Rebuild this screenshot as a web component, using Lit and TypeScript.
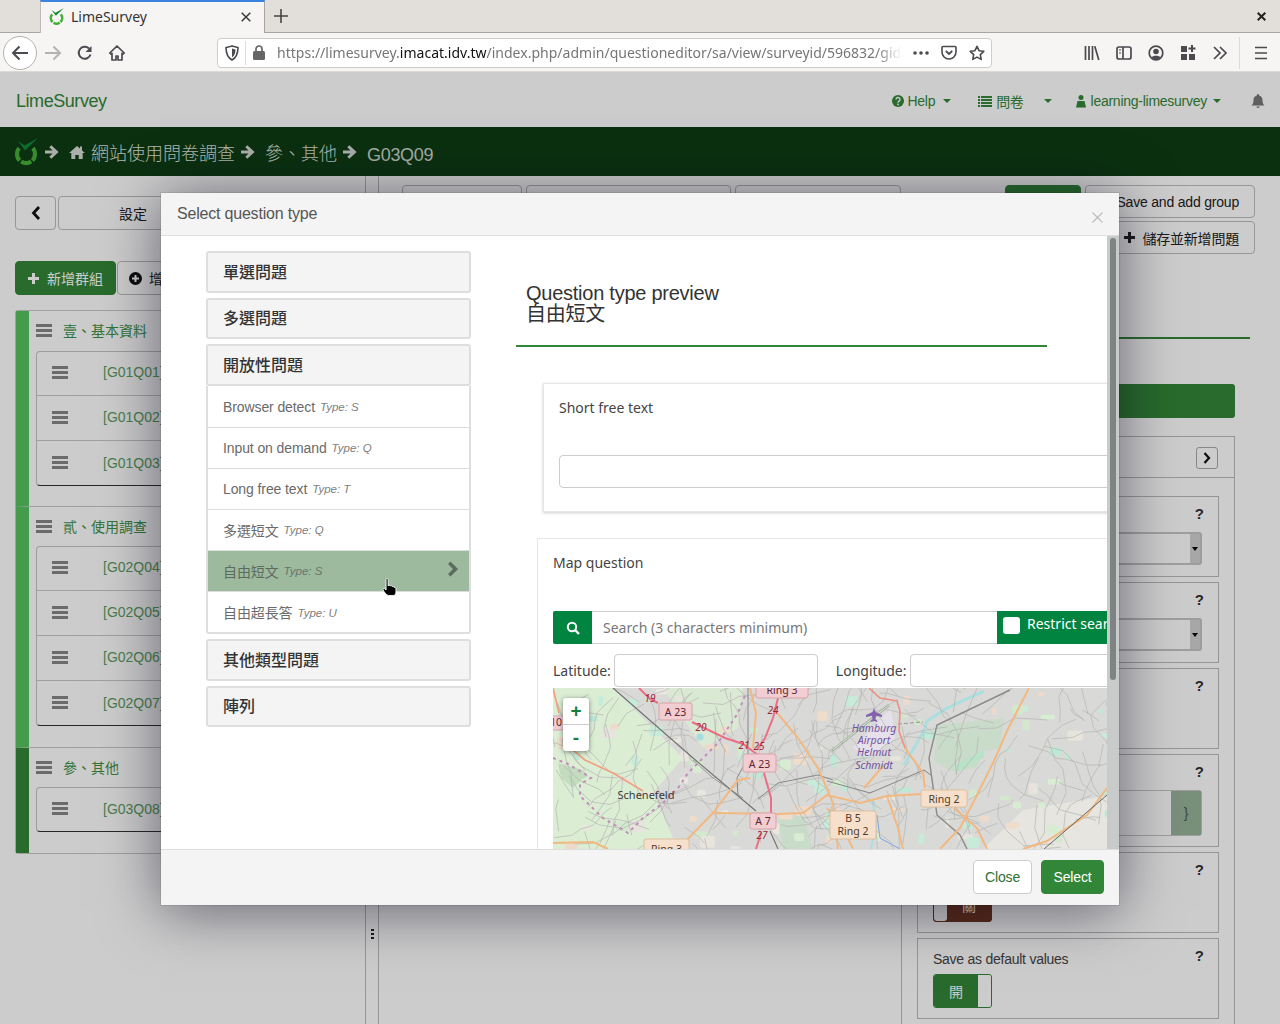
import { LitElement, html, css, svg } from 'lit';
import { customElement } from 'lit/decorators.js';

const SANS = css`"Liberation Sans", "Noto Sans CJK TC", sans-serif`;
const NOTO = css`"Noto Sans", "Noto Sans CJK TC", sans-serif`;

const limeLogo = (size: number) => html`
  <svg class="logo" width=${size} height=${(size * 28) / 24} viewBox="0 0 24 28">
    <path d="M5.100 10.200A9 9 0 0 0 5.600 22.400" fill="none" stroke="#45b03a" stroke-width="4.200"/>
    <path d="M7.200 23.600A9 9 0 0 0 17.200 23.400" fill="none" stroke="#45b03a" stroke-width="4.200"/>
    <path d="M18.400 22.400A9 9 0 0 0 18.900 10.200" fill="none" stroke="#45b03a" stroke-width="4.200"/>
    <path d="M4 3L10.500 7.500 24 0 11 12.500Z" fill="#11893a"/>
  </svg>`;

const arrowRight = (l: number, r: number) => html`
  <svg style="margin:0 ${r}px 0 ${l}px;flex:none" width="16" height="16" viewBox="0 0 16 16">
    <path d="M1 6.500h7.500L5.300 3.200 7.300 1.200 14.600 8l-7.300 6.800-2-2 3.200-3.300H1z" fill="#d5dbd5"/>
  </svg>`;

const burger = () => html`
  <svg width="16" height="13" viewBox="0 0 16 13" style="flex:none">
    <path d="M0 0h16v3H0zM0 5h16v3H0zM0 10h16v3H0z" fill="#868686"/>
  </svg>`;

const caret = html`<span class="caret"></span>`;

/* Static road map. Everything here is a position on a free canvas. */
@customElement('osm-map')
export class OsmMap extends LitElement {
  static styles = css`
    :host { display: block; width: 554px; height: 161px; overflow: hidden; }
    svg { display: block; }
    text { font-family: "Noto Sans", sans-serif; }
  `;

  private rand(start: number) {
    let seed = start;
    return () => {
      seed = (seed * 16807) % 2147483647;
      return seed / 2147483647;
    };
  }

  private streets() {
    // small seeded walks give the grey street texture
    const rnd = this.rand(4711);
    const out: string[] = [];
    for (let i = 0; i < 210; i++) {
      let x = rnd() * 554;
      let y = rnd() * 161;
      let a = rnd() * 6.28;
      let d = `M${x.toFixed(1)} ${y.toFixed(1)}`;
      const n = 2 + Math.floor(rnd() * 4);
      for (let j = 0; j < n; j++) {
        a += (rnd() - 0.5) * 1.2;
        const l = 6 + rnd() * 18;
        x += Math.cos(a) * l;
        y += Math.sin(a) * l;
        d += `L${x.toFixed(1)} ${y.toFixed(1)}`;
      }
      out.push(d);
    }
    return out;
  }

  private patches() {
    const rnd = this.rand(907);
    const colors = ['#d3e8cc', '#f0dccb', '#e6e4dc', '#c6ecd9', '#d8ecd2', '#eedaca', '#e8e6de', '#bfe9d6'];
    const out: { x: number; y: number; w: number; h: number; c: string }[] = [];
    for (let i = 0; i < 110; i++) {
      out.push({
        x: rnd() * 554,
        y: rnd() * 161,
        w: 3 + rnd() * 13,
        h: 3 + rnd() * 9,
        c: colors[Math.floor(rnd() * colors.length)],
      });
    }
    return out;
  }

  render() {
    const orange = [
      'M197 0L203 25L200 60',
      'M220 20L245 50L265 80L280 115L285 161',
      'M125 161L160 125L185 92L197 90',
      'M160 125L225 126L250 125L274 107L307 115L334 108L369 106',
      'M352 60L370 85L372 100',
      'M476 0L454 43L441 73L421 113L407 140L387 161',
      'M311 100L331 77',
      'M401 120L424 140L434 161',
      'M554 100L534 127L494 153L470 161',
      'M274 120L290 140L300 161',
      'M334 108L345 140L350 161',
      'M0 155L40 154L55 161',
    ];
    const boxes = [
      { x: 106, y: 15, w: 33, h: 17, t: ['A 23'], f: '#f2cdd2', s: '#d9a3ab', c: '#5a2630' },
      { x: 203, y: -6, w: 52, h: 16, t: ['Ring 3'], f: '#f2cdd2', s: '#d9a3ab', c: '#5a2630' },
      { x: 190, y: 66, w: 33, h: 18, t: ['A 23'], f: '#f2cdd2', s: '#d9a3ab', c: '#5a2630' },
      { x: 197, y: 125, w: 26, h: 16, t: ['A 7'], f: '#f2cdd2', s: '#d9a3ab', c: '#5a2630' },
      { x: 277, y: 123, w: 46, h: 28, t: ['B 5', 'Ring 2'], f: '#f7e0cb', s: '#dcbf9f', c: '#4f3a26' },
      { x: 368, y: 102, w: 46, h: 17, t: ['Ring 2'], f: '#f7e0cb', s: '#dcbf9f', c: '#4f3a26' },
      { x: 91, y: 151, w: 45, h: 18, t: ['Ring 3'], f: '#f7e0cb', s: '#dcbf9f', c: '#4f3a26' },
      { x: -9, y: 28, w: 24, h: 14, t: ['10'], f: '#f2cdd2', s: '#d9a3ab', c: '#5a2630' },
    ];
    const nums = [
      ['19', 97, 10], ['20', 148, 39], ['21', 191, 57], ['25', 206, 58], ['24', 220, 22], ['27', 209, 147],
    ];
    return html`
      <svg width="554" height="161" viewBox="0 0 554 161">
        <rect width="554" height="161" fill="#d9d9d7"/>
        <path d="M0 0H60L130 70L100 105L125 161H0Z" fill="#dbeed4"/>
        <path d="M110 0H190L185 40L150 60Z" fill="#d9e9d3"/>
        <path d="M430 161L470 122L554 108V161Z" fill="#e6e5df"/>
        <path d="M225 130L250 127L260 161H230Z" fill="#c9dcca"/>
        ${this.patches().map(p => svg`<rect x=${p.x} y=${p.y} width=${p.w} height=${p.h} rx="2" fill=${p.c}/>`)}
        <path d="M5 75L30 82L35 88L28 92L20 100L8 90Z" fill="#c3dcbe"/>
        <path d="M384 37L451 30L447 60L431 63L424 80L397 83L381 73Z" fill="#c9dcca"/>
        <path d="M401 78L430 62L432 68L406 84Z" fill="#b9e3c9"/>
        <path d="M300 60L338 20L342 50L315 70Z" fill="#e6e0ea"/>
        <path d="M279 63L336 17" fill="none" stroke="#9fb0a0" stroke-width="2.500"/>
        <path d="M280 62L336 17" fill="none" stroke="#dfe8dc" stroke-width="1"/>
        <path d="M431 3L394 20L374 33L371 43L351 77" fill="none" stroke="#a9dfe0" stroke-width="3"/>
        <path d="M320 112L322 140L318 161" fill="none" stroke="#a9dfe0" stroke-width="2"/>
        <circle cx="147" cy="49" r="3.500" fill="#a5dde0"/>
        <path d="M324 127L327 150L347 161" fill="none" stroke="#7ea3e8" stroke-width="1"/>
        ${this.streets().map(d => svg`<path d=${d} fill="none" stroke="#b4b4b2" stroke-width=".7"/>`)}
        <path d="M60 0L140 70L203 123M217 143L225 161" fill="none" stroke="#6f6f6f" stroke-width="1.100"/>
        <path d="M140 72L160 90L190 110" fill="none" stroke="#8c8c8c" stroke-width=".8"/>
        <path d="M195 0L195 70L184 90L185 108" fill="none" stroke="#868686" stroke-width="1"/>
        <path d="M205 111L225 95L265 87L280 92" fill="none" stroke="#828282" stroke-width=".9"/>
        <path d="M274 93L317 105L371 82L379 88" fill="none" stroke="#7c7c7c" stroke-width=".9"/>
        <path d="M457 2L384 37L376 70L384 127L407 147L414 161" fill="none" stroke="#8a8a8a" stroke-width="1.400"/>
        <path d="M345 36L370 34" fill="none" stroke="#999" stroke-dasharray="4 2"/>
        <path d="M0 70L15 76L35 88L38 90L27 96L27 108L50 130L75 145L90 130L110 115L125 100L135 85L165 55L185 25L193 5" fill="none" stroke="#c48bbd" stroke-width="2" stroke-dasharray="3 4"/>
        ${orange.map(d => svg`<path d=${d} fill="none" stroke="#f2b880" stroke-width="2"/>`)}
        <path d="M554 107L491 161" fill="none" stroke="#666" stroke-width="1"/>
        <path d="M0 0L6 25M20 62L32 72L60 85L90 103" fill="none" stroke="#f2a083" stroke-width="1.700"/>
        <path d="M316 0L327 10L344 13L347 23L346 43L352 60" fill="none" stroke="#ee8f80" stroke-width="1.600"/>
        <path d="M86 0L97 11L105 15M139 34L172 50L190 56L205 67M225 10L220 30L212 50L204 62M211 85L218 110L218 125M208 145L203 161" fill="none" stroke="#ec6f85" stroke-width="2"/>
        ${boxes.map(b => svg`
          <rect x=${b.x} y=${b.y} width=${b.w} height=${b.h} rx="2" fill=${b.f} stroke=${b.s}/>
          ${b.t.map((t, i) => svg`<text x=${b.x + b.w / 2} y=${b.y + b.h - (b.t.length - i - 1) * 13 - 4} text-anchor="middle" font-size="10.500" fill=${b.c}>${t}</text>`)}
        `)}
        ${nums.map(n => svg`<text x=${n[1]} y=${Number(n[2]) + 4} text-anchor="middle" font-size="10" font-style="italic" fill="#a3243c">${n[0]}</text>`)}
        <text x="93" y="111" text-anchor="middle" font-size="11" fill="#3a3a3a">Schenefeld</text>
        <path d="M321 20l1.500 4 6.500 3v2l-6-1.300-.6 3.600 1.800 1.500v1.200l-3.200-.9-3.200.9v-1.200l1.800-1.500-.6-3.600-6 1.300v-2l6.500-3z" fill="#8461ad"/>
        ${['Hamburg', 'Airport', 'Helmut', 'Schmidt'].map((t, i) => svg`<text x="321" y=${44 + i * 12.2} text-anchor="middle" font-size="10.500" font-style="italic" fill="#7252a0">${t}</text>`)}
      </svg>`;
  }
}

/* The question type dialog */
@customElement('type-modal')
export class TypeModal extends LitElement {
  static styles = css`
    :host {
      display: flex;
      flex-direction: column;
      width: 958px;
      height: 712px;
      background: #fff;
      font-family: ${SANS};
      color: #333;
      overflow: hidden;
    }
    .head {
      height: 43px;
      flex: none;
      box-sizing: border-box;
      display: flex;
      align-items: center;
      justify-content: space-between;
      padding: 0 16px;
      background: #f4f4f4;
      border-bottom: 1px solid #ddd;
      font-size: 16px;
      letter-spacing: -.2px;
      color: #555;
    }
    .x { width: 11px; height: 11px; margin-top: 7px; }
    .body { flex: 1; display: flex; min-height: 0; }
    .types {
      width: 265px;
      flex: none;
      margin: 15px 0 0 45px;
      display: flex;
      flex-direction: column;
      gap: 5px;
    }
    .acc {
      box-sizing: border-box;
      height: 41.500px;
      display: flex;
      align-items: center;
      padding: 0 15px 2px;
      background: #f4f4f4;
      border: 2px solid #dedede;
      border-radius: 3px;
      font-size: 16px;
      font-weight: 500;
      color: #333;
    }
    .open-list {
      margin-top: -5px;
      box-sizing: border-box;
      height: 248.500px;
      padding-top: 1px;
      background: #fff;
      border: 2px solid #dedede;
      border-top: 0;
      border-radius: 0 0 3px 3px;
    }
    .row {
      box-sizing: border-box;
      height: 41px;
      padding: 0 15px;
      display: flex;
      align-items: center;
      border-bottom: 1px solid #ddd;
      font-size: 14px;
      letter-spacing: -.1px;
      color: #6a6a6a;
    }
    .row:last-child { border-bottom: 0; }
    .row em { margin-left: 5px; font-size: 11.500px; letter-spacing: 0; color: #808080; padding-top: 1px; }
    .row.on { background: #9dba9f; color: #5d6a5e; }
    .row.on em { color: #66766a; }
    .row svg { margin-left: auto; margin-right: -5px; margin-top: -3px; }
    .preview { flex: 1; min-width: 0; overflow: hidden; padding-left: 45px; }
    .preview h4 {
      margin: 47px 0 0 10px;
      font-size: 20px;
      line-height: 21px;
      font-weight: 400;
      letter-spacing: -.25px;
      color: #333;
    }
    .rule { width: 531px; height: 2px; margin-top: 20px; background: #328637; }
    .q {
      box-sizing: border-box;
      background: #fff;
      border: 1px solid #e6e6e6;
      font-family: ${NOTO};
      font-size: 14px;
      color: #444;
      width: 620px;
    }
    .q.short {
      margin: 36px 0 0 27px;
      height: 129px;
      padding: 14px 15px;
      box-shadow: 0 1px 3px rgba(0, 0, 0, .2);
    }
    .q.map { margin: 26px 0 0 21px; height: 340px; padding: 14px 15px; }
    .q .label { line-height: 20px; }
    .q input {
      box-sizing: border-box;
      display: block;
      height: 33px;
      border: 1px solid #ccc;
      border-radius: 4px;
      background: #fff;
      padding: 0;
    }
    .short input { width: 600px; margin-top: 37px; }
    .search {
      display: flex;
      width: 600px;
      height: 33px;
      margin-top: 38px;
      box-sizing: border-box;
      border: 1px solid #ccc;
      border-left: 0;
      border-radius: 2px;
    }
    .search .ico {
      width: 39px;
      height: 33px;
      margin-top: -1px;
      flex: none;
      background: #00843f;
      display: flex;
      align-items: center;
      justify-content: center;
      border-radius: 2px 0 0 2px;
    }
    .search .ph { width: 405px; padding: 0 11px; box-sizing: border-box; line-height: 32px; color: #777; flex: none; }
    .search .restrict {
      flex: 1;
      height: 33px;
      margin-top: -1px;
      background: #00843f;
      color: #fff;
      display: flex;
      gap: 7px;
      padding: 3px 0 0 6px;
      box-sizing: border-box;
      white-space: nowrap;
      line-height: 20px;
    }
    .box { width: 17px; height: 17px; background: #fff; border-radius: 3px; flex: none; margin-top: 3px; }
    .coords { display: flex; align-items: center; height: 33px; margin-top: 10px; gap: 3px; }
    .coords input { flex: none; }
    .coords input.lat { width: 204px; margin-right: 15px; }
    .coords input.lng { width: 260px; margin-left: 1px; }
    .mapwrap { position: relative; margin-top: 1px; }
    .zoom {
      position: absolute;
      left: 10px;
      top: 10px;
      width: 26px;
      background: #fff;
      border-radius: 3px;
      box-shadow: 0 1px 5px rgba(0, 0, 0, .45);
      font: bold 19px/26px "Liberation Sans", sans-serif;
      color: #15803d;
      text-align: center;
    }
    .zoom div { height: 26px; }
    .zoom div:first-child { border-bottom: 1px solid #ccc; }
    .track { width: 12px; flex: none; background: #c9cbcb; display: flex; justify-content: center; padding-top: 2px; box-sizing: border-box; }
    .thumb { width: 6px; height: 442px; background: #7e8383; border-radius: 3px; }
    .foot {
      height: 56px;
      flex: none;
      box-sizing: border-box;
      border-top: 1px solid #ddd;
      background: #f4f4f4;
      display: flex;
      align-items: center;
      justify-content: flex-end;
      gap: 9px;
      padding: 0 15px 1px;
    }
    .btn {
      box-sizing: border-box;
      width: 59px;
      height: 34px;
      display: flex;
      align-items: center;
      justify-content: center;
      border-radius: 4px;
      font-size: 14px;
      letter-spacing: -.15px;
      border: 1px solid #ccc;
      background: #fff;
      color: #2f6f35;
    }
    .btn.go { width: 63px; background: #328637; border-color: #328637; color: #fff; }
  `;

  render() {
    return html`
      <div class="head">
        <span>Select question type</span>
        <svg class="x" viewBox="0 0 11 11"><path d="M.5.5l10 10M10.500.5l-10 10" stroke="#bdbdbd" stroke-width="1.200"/></svg>
      </div>
      <div class="body">
        <div class="types">
          <div class="acc">單選問題</div>
          <div class="acc">多選問題</div>
          <div class="acc">開放性問題</div>
          <div class="open-list">
            <div class="row">Browser detect <em>Type: S</em></div>
            <div class="row">Input on demand <em>Type: Q</em></div>
            <div class="row">Long free text <em>Type: T</em></div>
            <div class="row">多選短文 <em>Type: Q</em></div>
            <div class="row on">自由短文 <em>Type: S</em>
              <svg width="12" height="16" viewBox="0 0 12 16"><path d="M3.500.5l7.500 7.500-7.500 7.500-2.500-2.500 5-5-5-5z" fill="#5d6a5e"/></svg>
            </div>
            <div class="row">自由超長答 <em>Type: U</em></div>
          </div>
          <div class="acc">其他類型問題</div>
          <div class="acc">陣列</div>
        </div>
        <div class="preview">
          <h4>Question type preview<br>自由短文</h4>
          <div class="rule"></div>
          <div class="q short">
            <div class="label">Short free text</div>
            <input>
          </div>
          <div class="q map">
            <div class="label">Map question</div>
            <div class="search">
              <div class="ico">
                <svg width="14" height="14" viewBox="0 0 14 14"><circle cx="6" cy="6" r="4.200" fill="none" stroke="#fff" stroke-width="2"/><path d="M9 9l4 4" stroke="#fff" stroke-width="2.400"/></svg>
              </div>
              <div class="ph">Search (3 characters minimum)</div>
              <div class="restrict"><span class="box"></span>Restrict search</div>
            </div>
            <div class="coords">
              <span>Latitude:</span><input class="lat">
              <span>Longitude:</span><input class="lng">
            </div>
            <div class="mapwrap">
              <osm-map></osm-map>
              <div class="zoom"><div>+</div><div>-</div></div>
            </div>
          </div>
        </div>
        <div class="track"><div class="thumb"></div></div>
      </div>
      <div class="foot">
        <div class="btn">Close</div>
        <div class="btn go">Select</div>
      </div>
    `;
  }
}

@customElement('app-root')
export class AppRoot extends LitElement {
  static styles = css`
    :host {
      display: block;
      width: 1280px;
      height: 1024px;
      overflow: hidden;
      font-family: ${SANS};
      background: #fff;
    }
    /* browser */
    .tabs {
      height: 33px;
      box-sizing: border-box;
      background: #e2dfdb;
      border-bottom: 1px solid #a8a6a3;
      display: flex;
      align-items: stretch;
      padding-left: 40px;
      font-family: ${NOTO};
    }
    .tab {
      width: 225px;
      height: 33px;
      box-sizing: border-box;
      background: #f6f5f3;
      border-top: 2px solid #3b83e0;
      border-right: 1px solid #a8a6a3;
      border-left: 1px solid #bdbbb8;
      display: flex;
      align-items: center;
      padding: 0 13px 2px 8px;
      font-size: 14px;
      color: #333;
    }
    .tab .name { margin-left: 7px; flex: 1; }
    .newtab { margin: 9px 0 0 9px; }
    .winx { margin: 12px 14px 0 auto; }
    .bar {
      height: 39px;
      box-sizing: border-box;
      background: #f6f5f3;
      border-bottom: 1px solid #dcdad7;
      display: flex;
      align-items: center;
      padding: 1px 0 0 3px;
      font-family: ${NOTO};
    }
    .back {
      width: 34px;
      height: 34px;
      box-sizing: border-box;
      border: 1px solid #b5b3b0;
      border-radius: 50%;
      background: #fff;
      display: flex;
      align-items: center;
      justify-content: center;
    }
    .tool { width: 32px; display: flex; justify-content: center; flex: none; }
    .url {
      width: 775px;
      height: 30px;
      box-sizing: border-box;
      margin-left: 84px;
      border: 1px solid #cfcdca;
      border-radius: 4px;
      background: #fff;
      display: flex;
      align-items: center;
      padding-left: 7px;
      flex: none;
    }
    .url .sep { width: 1px; height: 24px; background: #ddd; margin: 0 7px 0 6px; }
    .addr {
      margin-left: 12px;
      width: 625px;
      flex: none;
      overflow: hidden;
      white-space: nowrap;
      font-size: 14px;
      letter-spacing: .01px;
      color: #767676;
      -webkit-mask-image: linear-gradient(to right, #000 96%, transparent);
      mask-image: linear-gradient(to right, #000 96%, transparent);
    }
    .addr b { font-weight: 400; color: #111; }
    .url .end { margin-left: auto; display: flex; gap: 12px; padding-right: 6px; align-items: center; }
    .right-tools { display: flex; margin-left: 84px; align-items: center; }
    .bar .vsep { width: 1px; height: 32px; background: #dddbd8; margin: 0 5px 0 3px; }

    /* page under the dialog */
    .page { position: relative; height: 952px; overflow: hidden; background: #fff; }
    .nav {
      height: 55px;
      box-sizing: border-box;
      display: flex;
      align-items: center;
      padding: 3px 15px 0 16px;
      color: #328637;
      font-size: 14px;
      letter-spacing: -.3px;
    }
    .brand { font-size: 18px; margin-right: auto; letter-spacing: -.45px; }
    .nav .item { display: flex; align-items: center; gap: 4px; }
    .nav .item.help { margin-right: 27px; }
    .nav .item.list { margin-right: 24px; }
    .nav .item.user { margin-right: 30px; gap: 5px; letter-spacing: -.26px; }
    .nav .item.user .caret { margin-left: 1px; }
    .caret {
      display: inline-block;
      width: 0;
      height: 0;
      border-left: 4px solid transparent;
      border-right: 4px solid transparent;
      border-top: 4px solid currentColor;
      margin-left: 4px;
    }
    .crumbs {
      height: 49px;
      background: #0e3c14;
      color: #dde4dd;
      display: flex;
      align-items: center;
      padding-left: 14px;
      font-size: 18px;
      font-weight: 300;
    }
    .logo { flex: none; }
    .crumbs .code { margin: 8px 0 0 3px; letter-spacing: -.3px; color: #cfd7cf; }
    .work { display: flex; height: 848px; }

    .side { width: 366px; flex: none; box-sizing: border-box; border-right: 1px solid #bbb; padding: 20px 0 0 15px; }
    .side-top { display: flex; gap: 2px; height: 34px; }
    .b {
      box-sizing: border-box;
      border: 1px solid #bdbdbd;
      border-radius: 4px;
      display: flex;
      align-items: center;
      justify-content: center;
      font-size: 14px;
      color: #222;
      background: #fff;
    }
    .b.backb { width: 41px; }
    .b.set { width: 150px; }
    .side-act { display: flex; gap: 1px; margin-top: 31px; height: 34px; }
    .b.add { width: 101px; background: #328637; color: #fff; border-color: #328637; gap: 8px; }
    .b.add2 { width: 140px; justify-content: flex-start; padding-left: 11px; gap: 7px; }
    .groups { margin-top: 15px; width: 340px; box-sizing: border-box; border: 1px solid #c8c8c8; border-radius: 3px; }
    .group { box-sizing: border-box; border-left: 13px solid #56c25f; padding: 10px 0 21px 7px; border-bottom: 1px solid #c8c8c8; }
    .group:first-child { padding-bottom: 20px; }
    .group:last-child { border-bottom: 0; border-left-color: #328637; }
    .gt { display: flex; align-items: center; gap: 11px; height: 18px; font-size: 14px; color: #3f9146; }
    .items { box-sizing: border-box; margin-top: 11px; border: 1px solid #c4c4c4; border-bottom: 1px solid #333; border-radius: 4px; width: 320px; }
    .group:first-child .items { margin-top: 12px; }
    .it { height: 45px; box-sizing: border-box; display: flex; align-items: center; padding: 0 0 2px 15px; border-bottom: 1px solid #c8c8c8; font-size: 14px; color: #5aa060; }
    .it:first-child { margin-top: -1px; }
    .it:last-child { border-bottom: 0; margin-bottom: -1px; }
    .it span { margin-left: 35px; }

    .handle { width: 13px; flex: none; box-sizing: border-box; border-right: 1px solid #bbb; position: relative; }
    .dots { position: absolute; left: 5px; top: 753px; width: 3px; height: 10px; background: repeating-linear-gradient(#222 0 2px, transparent 2px 4px); }

    .content { flex: 1; min-width: 0; display: flex; flex-direction: column; padding-top: 9px; }
    .top { display: flex; justify-content: space-between; padding: 0 25px 0 23px; height: 69px; }
    .ttabs { display: flex; gap: 4px; }
    .ttab { box-sizing: border-box; height: 30px; border: 1px solid #bbb; border-radius: 4px 4px 0 0; }
    .actions { display: flex; flex-direction: column; align-items: flex-end; gap: 3px; }
    .act-row { display: flex; gap: 4px; }
    .b.save { width: 76px; height: 33px; background: #328637; border-color: #328637; }
    .b.w { width: 170px; height: 33px; justify-content: flex-end; padding-right: 15px; letter-spacing: -.2px; gap: 7px; color: #222; }
    .hr { height: 2px; background: #328637; margin: 83px 30px 0 0; }
    .bigbar { height: 34px; background: #328637; margin: 45px 45px 0 0; border-radius: 3px; }
    .cols { flex: 1; display: flex; margin-top: 18px; }
    .main { width: 523px; flex: none; box-sizing: border-box; border-right: 1px solid #bbb; }
    .panel { width: 333px; flex: none; box-sizing: border-box; border-right: 1px solid #bbb; padding-left: 15px; }
    .panel-h { height: 42px; margin-left: -15px; box-sizing: border-box; border: 1px solid #bbb; border-width: 1px 0; display: flex; align-items: center; justify-content: flex-end; padding: 2px 16px 0 0; }
    .chev { box-sizing: border-box; width: 22px; height: 22px; border: 1px solid #aaa; border-radius: 3px; display: flex; align-items: center; justify-content: center; }
    .cards { margin-top: 18px; display: flex; flex-direction: column; gap: 5px; }
    .card { box-sizing: border-box; width: 302px; height: 81px; border: 1px solid #bcbcbc; padding: 11px 15px 0; font-size: 14px; color: #444; }
    .card.tall { height: 93px; }
    .card .lbl { height: 24px; display: flex; justify-content: space-between; line-height: 18px; }
    .card .lbl .t { letter-spacing: -.25px; }
    .card .q { font-weight: 700; font-size: 15px; color: #333; margin: -3px -1px 0 0; }
    .select { height: 33px; margin-right: 1px; box-sizing: border-box; border: 2px solid #c6c6c6; border-radius: 3px; display: flex; justify-content: flex-end; }
    .select i { width: 10px; background: #d2d2d2; display: flex; align-items: center; justify-content: center; color: #000; }
    .select .caret { margin: 0; border-width: 4px 3px 0; }
    .area { height: 46px; margin-right: 1px; box-sizing: border-box; border: 1px solid #c6c6c6; border-radius: 3px; display: flex; justify-content: flex-end; }
    .area i { width: 30px; background: #98b59a; color: #555; font-style: normal; display: flex; align-items: center; justify-content: center; }
    .toggle { box-sizing: border-box; width: 59px; height: 34px; border: 1px solid #328637; border-radius: 3px; display: flex; color: #fff; overflow: hidden; }
    .toggle b { font-weight: 400; background: #328637; flex: 1; display: flex; align-items: center; justify-content: center; }
    .toggle s { width: 13px; background: #fff; border-radius: 3px; text-decoration: none; }
    .toggle.off { border-color: #70351f; flex-direction: row-reverse; background: #70351f; }
    .toggle.off b { background: #70351f; }

    .backdrop { position: absolute; inset: 0; background: rgba(0, 0, 0, .2); }
    .dialog {
      position: absolute;
      left: 161px;
      top: 121px;
      box-shadow: 0 0 0 1px rgba(0, 0, 0, .08), 0 5px 55px rgba(10, 10, 30, .55);
    }
    .cursor { position: absolute; left: 382px; top: 506px; }
  `;

  private groupItems(codes: string[]) {
    return html`<div class="items">
      ${codes.map(c => html`<div class="it">${burger()}<span>[${c}]</span></div>`)}
    </div>`;
  }

  private card(opts: { label?: string; tall?: boolean; body?: unknown }) {
    return html`<div class="card ${opts.tall ? 'tall' : ''}">
      <div class="lbl"><span class="t">${opts.label ?? ''}</span><span class="q">?</span></div>
      ${opts.body ?? ''}
    </div>`;
  }

  render() {
    const stroke = '#4a4a4f';
    const select = html`<div class="select"><i><span class="caret"></span></i></div>`;
    return html`
      <div class="tabs">
        <div class="tab">
          ${limeLogo(15)}
          <span class="name">LimeSurvey</span>
          <svg width="10" height="10" viewBox="0 0 10 10"><path d="M.7.7l8.600 8.600M9.300.7L.7 9.300" stroke="#333" stroke-width="1.400"/></svg>
        </div>
        <svg class="newtab" width="14" height="14" viewBox="0 0 14 14"><path d="M7 0v14M0 7h14" stroke="#444" stroke-width="1.600"/></svg>
        <svg class="winx" width="9" height="9" viewBox="0 0 9 9"><path d="M.7.7l7.600 7.600M8.300.7L.7 8.300" stroke="#222" stroke-width="2"/></svg>
      </div>
      <div class="bar">
        <div class="back">
          <svg width="18" height="16" viewBox="0 0 18 16"><path d="M17 8H2M8.500 1.500L2 8l6.500 6.500" fill="none" stroke=${stroke} stroke-width="2"/></svg>
        </div>
        <div class="tool">
          <svg width="18" height="16" viewBox="0 0 18 16"><path d="M1 8h15M9.500 1.500L16 8l-6.500 6.500" fill="none" stroke="#b3b3b3" stroke-width="2"/></svg>
        </div>
        <div class="tool">
          <svg width="16" height="16" viewBox="0 0 16 16"><path d="M13.500 9.500A6 6 0 1 1 12 3.500" fill="none" stroke=${stroke} stroke-width="2"/><path d="M14.500 1v6h-6z" fill=${stroke}/></svg>
        </div>
        <div class="tool">
          <svg width="16" height="16" viewBox="0 0 16 16"><path d="M8 1L.8 8l1.300 1.200L3 8.400V15h4v-4h2v4h4V8.400l.9.8L15.200 8z" fill="none" stroke=${stroke} stroke-width="1.700" stroke-linejoin="round"/></svg>
        </div>
        <div class="url">
          <svg width="14" height="16" viewBox="0 0 14 16"><path d="M7 1l6 1.500c0 6-1.500 10-6 12.500C2.500 12.500 1 8.500 1 2.500z" fill="none" stroke=${stroke} stroke-width="1.600"/><path d="M7 3.500l3.500.9C10.400 8 9.500 10.500 7 12.300z" fill=${stroke}/></svg>
          <span class="sep"></span>
          <svg width="12" height="15" viewBox="0 0 12 15"><path d="M3 6V4a3 3 0 0 1 6 0v2" fill="none" stroke="#666" stroke-width="1.700"/><rect x="0" y="6" width="12" height="9" rx="1.500" fill="#666"/></svg>
          <div class="addr">https://limesurvey.<b>imacat.idv.tw</b>/index.php/admin/questioneditor/sa/view/surveyid/596832/gid/</div>
          <div class="end">
            <svg width="16" height="4" viewBox="0 0 16 4"><circle cx="2" cy="2" r="1.800" fill=${stroke}/><circle cx="8" cy="2" r="1.800" fill=${stroke}/><circle cx="14" cy="2" r="1.800" fill=${stroke}/></svg>
            <svg width="16" height="16" viewBox="0 0 16 16"><path d="M2 1.500h12a1 1 0 0 1 1 1V7a7 7 0 0 1-14 0V2.500a1 1 0 0 1 1-1z" fill="none" stroke=${stroke} stroke-width="1.600"/><path d="M4.800 6L8 9l3.200-3" fill="none" stroke=${stroke} stroke-width="1.800"/></svg>
            <svg width="16" height="16" viewBox="0 0 16 16"><path d="M8 1.300l2.100 4.400 4.700.6-3.500 3.300.9 4.800L8 12.100l-4.200 2.300.9-4.800L1.200 6.300l4.700-.6z" fill="none" stroke=${stroke} stroke-width="1.600" stroke-linejoin="round"/></svg>
          </div>
        </div>
        <div class="right-tools">
          <div class="tool">
            <svg width="16" height="16" viewBox="0 0 16 16"><path d="M1.500 1v14M5 1v14M8.500 1v14M10.800 1.200l4 13.800" stroke=${stroke} stroke-width="1.700"/></svg>
          </div>
          <div class="tool">
            <svg width="16" height="16" viewBox="0 0 16 16"><rect x="1" y="2" width="14" height="12" rx="2" fill="none" stroke=${stroke} stroke-width="1.700"/><path d="M7 2v12" stroke=${stroke} stroke-width="1.700"/><path d="M3 5h2M3 8h2" stroke=${stroke} stroke-width="1.200"/></svg>
          </div>
          <div class="tool">
            <svg width="16" height="16" viewBox="0 0 16 16"><circle cx="8" cy="8" r="6.800" fill="none" stroke=${stroke} stroke-width="1.700"/><circle cx="8" cy="6.500" r="2.800" fill=${stroke}/><path d="M3.500 12.500c1-2.500 8-2.500 9 0L8 15z" fill=${stroke}/></svg>
          </div>
          <div class="tool">
            <svg width="16" height="16" viewBox="0 0 16 16"><path d="M1 1h6v6H1zM1 9h6v6H1zM9 9h6v6H9z" fill=${stroke}/><path d="M12 0v7M8.500 3.500h7" stroke=${stroke} stroke-width="2"/></svg>
          </div>
          <div class="tool">
            <svg width="16" height="14" viewBox="0 0 16 14"><path d="M2 1l6 6-6 6M8 1l6 6-6 6" fill="none" stroke=${stroke} stroke-width="1.700"/></svg>
          </div>
          <span class="vsep"></span>
          <div class="tool">
            <svg width="14" height="14" viewBox="0 0 14 14"><path d="M1 1.500h12M1 7h12M1 12.500h12" stroke=${stroke} stroke-width="1.700"/></svg>
          </div>
        </div>
      </div>

      <div class="page">
        <div class="nav">
          <span class="brand">LimeSurvey</span>
          <span class="item help">
            <svg width="12" height="12" viewBox="0 0 12 12"><circle cx="6" cy="6" r="6" fill="currentColor"/><path d="M4 4.500a2 2 0 1 1 3 1.700c-.7.400-1 .7-1 1.500" fill="none" stroke="#fff" stroke-width="1.400"/><rect x="5.200" y="8.600" width="1.600" height="1.600" fill="#fff"/></svg>
            Help ${caret}
          </span>
          <span class="item list">
            <svg width="14" height="11" viewBox="0 0 14 11"><path d="M0 0h2v2H0zM3 0h11v2H3zM0 3h2v2H0zM3 3h11v2H3zM0 6h2v2H0zM3 6h11v2H3zM0 9h2v2H0zM3 9h11v2H3z" fill="currentColor"/></svg>
            問卷 <span class="caret" style="margin-left:16px"></span>
          </span>
          <span class="item user">
            <svg width="10" height="13" viewBox="0 0 10 13"><circle cx="5" cy="2.600" r="2.500" fill="currentColor"/><path d="M1.500 6h7L10 12.500H0z" fill="currentColor"/></svg>
            learning-limesurvey ${caret}
          </span>
          <svg width="14" height="14" viewBox="0 0 14 14"><path d="M7 0a1.300 1.300 0 0 1 1.200 1.400C10.500 2 11.500 3.800 11.500 6c0 3 .5 4 2 5.500H.5C2 10 2.500 9 2.500 6c0-2.200 1-4 3.300-4.600A1.300 1.300 0 0 1 7 0zM5.500 12.500h3a1.500 1.500 0 0 1-3 0z" fill="#777"/></svg>
        </div>
        <div class="crumbs">
          ${limeLogo(24)}
          ${arrowRight(6, 9)}
          <svg width="16" height="14" viewBox="0 0 16 14" style="flex:none"><path d="M8 1L0 8h2.300v6h4v-4h3.400v4h4V8H16l-3-2.600V1.500h-2v2z" fill="#d5dbd5"/></svg>
          <span style="margin-left:6px">網站使用問卷調查</span>
          ${arrowRight(5, 6)}
          <span style="margin-left:3px">參、其他</span>
          ${arrowRight(5, 6)}
          <span class="code">G03Q09</span>
        </div>
        <div class="work">
          <div class="side">
            <div class="side-top">
              <div class="b backb"><svg width="10" height="14" viewBox="0 0 10 14"><path d="M8 1L2.500 7 8 13" fill="none" stroke="#111" stroke-width="2.800"/></svg></div>
              <div class="b set">設定</div>
            </div>
            <div class="side-act">
              <div class="b add"><svg width="11" height="11" viewBox="0 0 11 11"><path d="M5.500 0v11M0 5.500h11" stroke="#fff" stroke-width="3"/></svg>新增群組</div>
              <div class="b add2"><svg width="13" height="13" viewBox="0 0 13 13"><circle cx="6.500" cy="6.500" r="6.500" fill="#111"/><path d="M6.500 3v7M3 6.500h7" stroke="#fff" stroke-width="2"/></svg>增加問題</div>
            </div>
            <div class="groups">
              <div class="group">
                <div class="gt">${burger()}壹、基本資料</div>
                ${this.groupItems(['G01Q01', 'G01Q02', 'G01Q03'])}
              </div>
              <div class="group">
                <div class="gt">${burger()}貳、使用調查</div>
                ${this.groupItems(['G02Q04', 'G02Q05', 'G02Q06', 'G02Q07'])}
              </div>
              <div class="group">
                <div class="gt">${burger()}參、其他</div>
                ${this.groupItems(['G03Q08'])}
              </div>
            </div>
          </div>
          <div class="handle"><div class="dots"></div></div>
          <div class="content">
            <div class="top">
              <div class="ttabs">
                <div class="ttab" style="width:120px"></div>
                <div class="ttab" style="width:205px"></div>
                <div class="ttab" style="width:166px"></div>
              </div>
              <div class="actions">
                <div class="act-row">
                  <div class="b save"></div>
                  <div class="b w">Save and add group</div>
                </div>
                <div class="b w">
                  <svg width="11" height="11" viewBox="0 0 11 11"><path d="M5.500 0v11M0 5.500h11" stroke="#222" stroke-width="3"/></svg>儲存並新增問題
                </div>
              </div>
            </div>
            <div class="hr"></div>
            <div class="bigbar"></div>
            <div class="cols">
              <div class="main"></div>
              <div class="panel">
                <div class="panel-h">
                  <div class="chev"><svg width="8" height="12" viewBox="0 0 8 12"><path d="M1.500 1l4.500 5-4.500 5" fill="none" stroke="#111" stroke-width="2.200"/></svg></div>
                </div>
                <div class="cards">
                  ${this.card({ body: select })}
                  ${this.card({ body: select })}
                  ${this.card({})}
                  ${this.card({ tall: true, body: html`<div class="area"><i>}</i></div>` })}
                  ${this.card({ body: html`<div class="toggle off"><b>關</b><s></s></div>` })}
                  ${this.card({ label: 'Save as default values', body: html`<div class="toggle"><b>開</b><s></s></div>` })}
                </div>
              </div>
            </div>
          </div>
        </div>

        <div class="backdrop"></div>
        <type-modal class="dialog"></type-modal>
        <svg class="cursor" width="16" height="18" viewBox="0 0 14 16">
          <path d="M3.500 1.200c0-1 1.800-1 1.800 0V7l.8-.6c.9-.2 1.400.2 1.500.7.800-.4 1.500 0 1.600.6.800-.3 1.500 0 1.600.8.700-.2 1.500.2 1.500 1v3c0 1.200-.8 3-1.800 3H5.500C4 15.500 1 11.500.8 10.500c-.3-1 .6-1.500 1.400-1l1.300 1.200z" fill="#000" stroke="#fff" stroke-width=".8"/>
        </svg>
      </div>
    `;
  }
}
